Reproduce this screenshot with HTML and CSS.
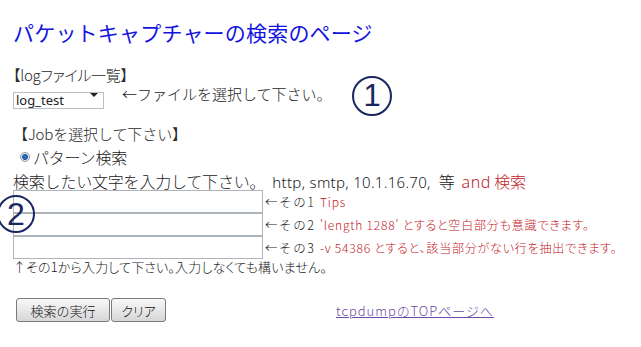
FILE: index.html
```html
<!DOCTYPE html>
<html lang="ja">
<head>
<meta charset="utf-8">
<title>パケットキャプチャーの検索のページ</title>
<link rel="stylesheet" href="styles.css">
</head>
<body>
<div class="page">
  <h1 class="title">パケットキャプチャーの検索のページ</h1>

  <section class="logs">
    <div class="label label-log">【logファイル一覧】</div>
    <div class="select-row">
      <span class="select-wrap"><select class="log-select"><option>log_test</option></select></span>
      <span class="hint">←ファイルを選択して下さい。</span>
      <span class="callout callout-1">1</span>
    </div>
  </section>

  <section class="job">
    <div class="label label-job">【Jobを選択して下さい】</div>
    <label class="radio-line"><input type="radio" class="radio" name="job" checked>パターン検索</label>
    <div class="instruction">検索したい文字を入力して下さい。<span class="latin">http, smtp, 10.1.16.70,</span><span class="etc">等</span><span class="red"><span class="latin-red">and</span> 検索</span></div>

    <div class="patterns">
      <span class="callout callout-2">2</span>
      <input type="text" class="pattern">
      <div class="note"><span class="arrow">←その1</span><span class="red">Tips</span></div>
      <input type="text" class="pattern">
      <div class="note"><span class="arrow">←その2</span><span class="red">'length 1288' とすると空白部分も意識できます。</span></div>
      <input type="text" class="pattern">
      <div class="note"><span class="arrow">←その3</span><span class="red">-v 54386 とすると、該当部分がない行を抽出できます。</span></div>
    </div>
    <div class="footnote">↑その1から入力して下さい。入力しなくても構いません。</div>
  </section>

  <div class="actions">
    <button class="btn btn-run" type="button">検索の実行</button>
    <button class="btn btn-clear" type="button">クリア</button>
    <a class="top-link" href="#">tcpdumpのTOPページへ</a>
  </div>
</div>
</body>
</html>
```

FILE: styles.css
```css
html, body {
  margin: 0;
  padding: 0;
  background: #ffffff;
}

body {
  font-family: "Noto Sans CJK JP", "Noto Sans", sans-serif;
  font-weight: 300;
  color: #1a1a1a;
}

.page {
  padding: 20px 0 0 13px;
  position: relative;
}

.title {
  margin: 0;
  font-size: 21px;
  line-height: 24px;
  font-weight: 400;
  color: #1414e0;
  letter-spacing: 0.2px;
}

.logs {
  margin-top: 21px;
}

.label {
  font-size: 15px;
  line-height: 20px;
  font-weight: 300;
  color: #2a2a2a;
}

.label-log {
  font-feature-settings: "palt";
  letter-spacing: -0.3px;
}

.select-row {
  display: flex;
  align-items: center;
  margin-top: 0;
  height: 18px;
  position: relative;
}

.select-wrap {
  position: relative;
  display: inline-block;
  width: 91px;
  height: 17px;
}

.select-wrap::after {
  content: "";
  position: absolute;
  right: 6px;
  top: 7px;
  border-left: 4px solid transparent;
  border-right: 4px solid transparent;
  border-top: 4px solid #222;
  pointer-events: none;
}

.log-select {
  appearance: none;
  -webkit-appearance: none;
  width: 91px;
  height: 17px;
  border: 1px solid #b9bfc6;
  border-radius: 0;
  background: #fff;
  font-family: "Noto Sans", "DejaVu Sans", sans-serif;
  font-weight: 400;
  font-size: 13px;
  line-height: 15px;
  padding: 0 0 0 2px;
  color: #222;
  margin: 0;
}

.hint {
  margin-left: 18px;
  font-size: 15px;
  line-height: 18px;
}

.callout {
  position: absolute;
  box-sizing: border-box;
  border: 2px solid #1b2660;
  border-radius: 50%;
  color: #1b2660;
  font-family: "Liberation Sans", "DejaVu Sans", sans-serif;
  font-weight: normal;
  display: flex;
  align-items: center;
  justify-content: center;
}

.callout-1 {
  left: 339px;
  top: -9px;
  width: 40px;
  height: 40px;
  font-size: 31px;
}

.callout-2 {
  left: -16px;
  top: 5px;
  width: 38px;
  height: 38px;
  font-size: 32px;
  z-index: 2;
}

.job {
  margin-top: 21px;
}

.label-job {
  letter-spacing: -0.1px;
}

.radio-line {
  display: flex;
  align-items: center;
  margin-top: 3px;
  padding-left: 7px;
  font-size: 16px;
  line-height: 20px;
  letter-spacing: -0.2px;
}

.radio {
  appearance: none;
  -webkit-appearance: none;
  width: 10px;
  height: 10px;
  margin: 0 3px 0 0;
  border-radius: 50%;
  border: 1px solid #8e99a6;
  background: radial-gradient(circle, #2f74c7 0, #1f5ca8 2.5px, #e9eef4 3.5px, #f7f9fb 5px);
}

.instruction {
  font-size: 16px;
  line-height: 20px;
  margin-top: 4px;
  letter-spacing: -0.2px;
  white-space: nowrap;
}

.latin {
  font-family: "Noto Sans", "DejaVu Sans", sans-serif;
  font-weight: 300;
  font-size: 15px;
  letter-spacing: 0.3px;
  margin-left: 7px;
}

.etc {
  margin-left: 8px;
}

.latin-red {
  font-family: "Noto Sans", "DejaVu Sans", sans-serif;
  font-weight: 300;
  font-size: 16px;
  letter-spacing: 0.5px;
}

.instruction .red {
  margin-left: 7px;
}

.red {
  color: #c4201f;
}

.patterns {
  position: relative;
  display: grid;
  grid-template-columns: 250px auto;
  align-items: center;
  margin-top: -2px;
}

.pattern {
  box-sizing: border-box;
  width: 250px;
  height: 23px;
  margin: 0;
  border: 1px solid #aeb4bc;
  border-radius: 0;
  background: #fff;
  padding: 0 3px;
}

.note {
  display: flex;
  align-items: baseline;
  font-size: 12px;
  line-height: 16px;
  padding-left: 2px;
  white-space: nowrap;
}

.arrow {
  width: 55px;
  font-size: 12.5px;
  letter-spacing: 1.6px;
}

.note .red {
  font-feature-settings: "palt";
  letter-spacing: 0.8px;
}

.footnote {
  font-size: 13px;
  line-height: 16px;
  margin-top: 0;
  font-feature-settings: "palt";
  letter-spacing: 0.15px;
}

.actions {
  display: flex;
  align-items: center;
  margin-top: 23px;
  padding-left: 3px;
}

.btn {
  box-sizing: border-box;
  height: 24px;
  margin: 0 1px 0 0;
  padding: 0;
  font-family: "Noto Sans CJK JP", sans-serif;
  font-weight: 300;
  font-size: 13px;
  color: #111;
  border: 1px solid #7a7a7a;
  border-radius: 3px;
  background: linear-gradient(#f8f8f8, #e6e6e6 55%, #d6d6d6);
}

.btn-run {
  width: 94px;
}

.btn-clear {
  width: 55px;
  font-feature-settings: "palt";
}

.top-link {
  margin-left: 169px;
  font-size: 13px;
  color: #6a4aa8;
  text-decoration: underline;
  font-feature-settings: "palt";
  letter-spacing: 1px;
}
```
